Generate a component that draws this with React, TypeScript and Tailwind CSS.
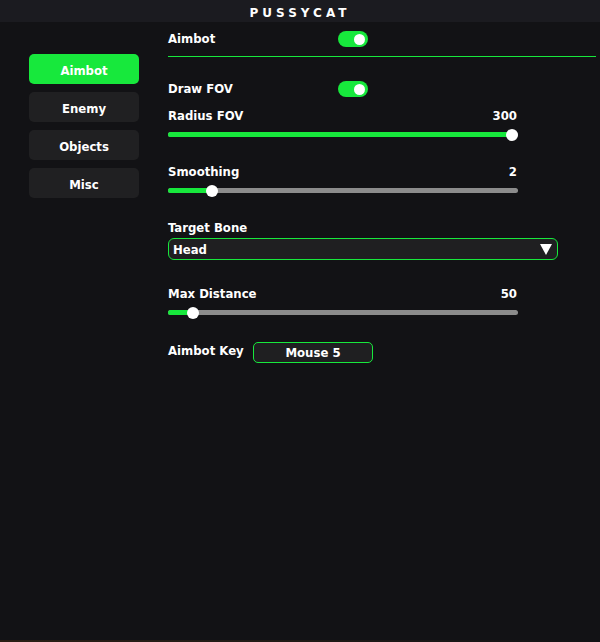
import { useState } from "react";

type SliderProps = {
  label: string;
  value: number;
  pct: number;
};

const Toggle = ({ on }: { on: boolean }) => (
  <div
    className={`flex h-[16px] w-[30px] items-center rounded-full px-[3px] ${
      on ? "justify-end bg-[#17e83c]" : "justify-start bg-[#555]"
    }`}
  >
    <div className="h-[11px] w-[11px] rounded-full bg-white" />
  </div>
);

// thumb stays inside the track, so its centre runs from 6px to width - 6px
const Slider = ({ label, value, pct }: SliderProps) => (
  <div className="w-[350px]">
    <div className="flex h-[16px] items-center justify-between pt-[2px]">
      <span>{label}</span>
      <span className="pr-px">{value}</span>
    </div>
    <div className="relative mt-[9px] h-[5px] w-full rounded-full bg-[#8c8c8c]">
      <div className="h-full rounded-full bg-[#17e83c]" style={{ width: `${6 + pct * 338}px` }} />
      <div
        className="absolute top-1/2 h-[12px] w-[12px] -translate-x-1/2 -translate-y-1/2 rounded-full bg-white"
        style={{ left: `${6 + pct * 338}px` }}
      />
    </div>
  </div>
);

const tabs = ["Aimbot", "Enemy", "Objects", "Misc"];

export default function App() {
  const [tab, setTab] = useState("Aimbot");

  return (
    <div className="flex h-[642px] w-[600px] flex-col bg-[#121215] font-['DejaVu_Sans_Condensed','DejaVu_Sans',sans-serif] text-[13px] font-bold text-white">
      <div className="flex h-[22px] shrink-0 items-center justify-center bg-[#1b1b20] pt-[3px] font-['DejaVu_Sans',sans-serif] text-[12px] tracking-[4px]">
        PUSSYCAT
      </div>

      <div className="flex flex-1">
        <div className="flex w-[168px] shrink-0 flex-col gap-[8px] pl-[29px] pt-[32px]">
          {tabs.map((t) => (
            <button
              key={t}
              onClick={() => setTab(t)}
              className={`flex h-[30px] w-[110px] items-center justify-center rounded-[5px] pt-[3px] ${
                tab === t ? "bg-[#17e83c]" : "bg-[#202022]"
              }`}
            >
              {t}
            </button>
          ))}
        </div>

        <div className="flex flex-1 flex-col pr-[4px] pt-[8px]">
          <div className="flex h-[16px] items-center pt-[2px]">
            <span className="w-[170px]">Aimbot</span>
            <Toggle on />
          </div>
          <div className="mt-[10px] h-px bg-[#17e83c]" />

          <div className="mt-[23px] flex h-[16px] items-center pt-[2px]">
            <span className="w-[170px]">Draw FOV</span>
            <Toggle on />
          </div>

          <div className="mt-[11px]">
            <Slider label="Radius FOV" value={300} pct={1} />
          </div>
          <div className="mt-[26px]">
            <Slider label="Smoothing" value={2} pct={0.111} />
          </div>

          <div className="mt-[26px] flex h-[16px] items-center pt-[2px]">Target Bone</div>
          <div className="mt-[3px] flex h-[22px] w-[390px] items-center justify-between rounded-[6px] border border-[#17e83c] bg-[#1f1f21] pl-[4px] pr-[5px]">
            <span className="pt-px">Head</span>
            <svg width="12" height="11" viewBox="0 0 12 11">
              <polygon points="0,0 12,0 6,11" fill="white" />
            </svg>
          </div>

          <div className="mt-[25px]">
            <Slider label="Max Distance" value={50} pct={0.056} />
          </div>

          <div className="mt-[26px] flex items-center">
            <span className="w-[85px] pb-[3px]">Aimbot Key</span>
            <div className="flex h-[21px] w-[120px] items-center justify-center rounded-[5px] border border-[#17e83c] bg-[#1f1f21] pt-px">
              Mouse 5
            </div>
          </div>
        </div>
      </div>

      <div className="h-[2px] shrink-0 bg-gradient-to-r from-[#2a1e14] via-[#1f1a16] to-[#121214]" />
    </div>
  );
}
